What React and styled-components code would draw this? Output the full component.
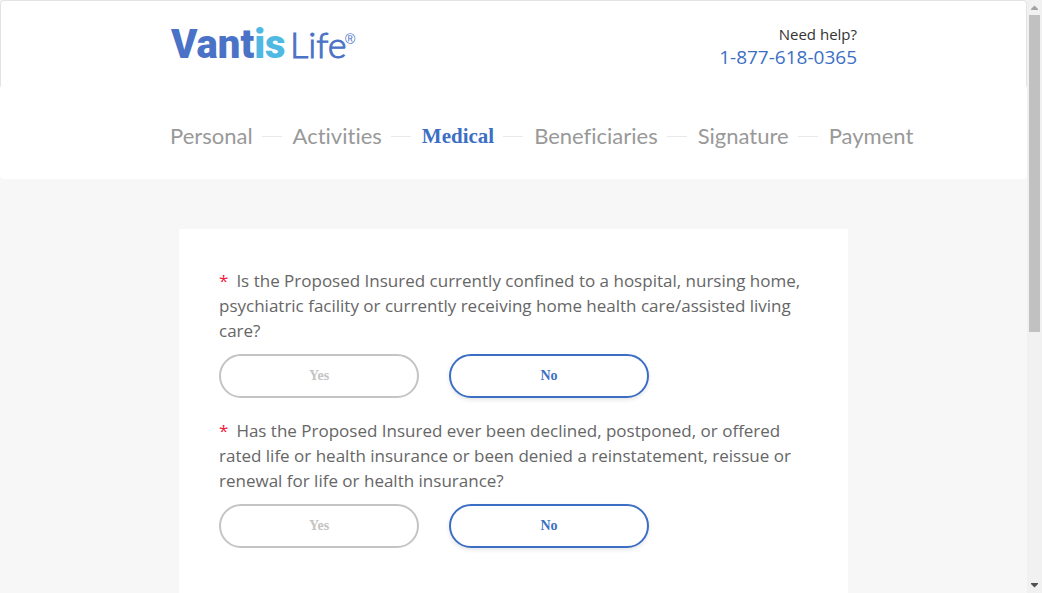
import React, { useState } from "react";
import styled, { createGlobalStyle } from "styled-components";

const blue = "#3c6fc4";

const GlobalStyle = createGlobalStyle`
  * { box-sizing: border-box; }
  body {
    margin: 0;
    background: #f7f7f7;
    color: #666;
    font-family: "Open Sans", sans-serif;
  }
`;

const Shell = styled.div`
  display: flex;
  align-items: stretch;
  height: 100vh;
`;

const Page = styled.div`
  flex: 1;
  min-width: 0;
  overflow: hidden;
`;

const Header = styled.header`
  padding: 19px 0 16px;
  background: #fff;
  border: 1px solid #e3e3e3;
  border-bottom: 0;
  border-radius: 4px 4px 0 0;
`;

const Container = styled.div`
  display: flex;
  justify-content: ${(p) => (p.$spread ? "space-between" : "flex-start")};
  max-width: 687px;
  margin: 0 auto;
`;

const LogoLink = styled.a`
  display: block;
  height: 50px;
`;

const Help = styled.div`
  display: flex;
  flex-direction: column;
  align-items: flex-end;
  padding-top: 4px;
  color: #333;
  font-size: 15px;
  line-height: 20px;
`;

const Phone = styled.a`
  color: ${blue};
  font-size: 19px;
  line-height: 26px;
  text-decoration: none;
`;

const StepBar = styled.nav`
  padding: 35px 0 28px;
  background: #fff;
  border-radius: 4px;
`;

const Steps = styled.ol`
  display: flex;
  margin: 0;
  padding: 0;
  list-style: none;
`;

const Step = styled.li`
  display: flex;
  align-items: center;
  white-space: nowrap;

  & + &::before {
    content: "";
    width: 20px;
    height: 1px;
    margin: 0 11px 0 9px;
    background: #e8e8e8;
  }
`;

const StepLink = styled.a`
  color: ${(p) => (p.$active ? blue : "#999")};
  font-family: ${(p) => (p.$active ? '"Liberation Serif", serif' : "Lato, sans-serif")};
  font-size: ${(p) => (p.$active ? 21 : 22)}px;
  font-weight: ${(p) => (p.$active ? 700 : 400)};
  font-variant-ligatures: none;
  line-height: 30px;
  text-decoration: none;
`;

const Card = styled.main`
  max-width: 669px;
  min-height: 100vh;
  margin: 50px auto 0;
  padding: 39px 40px;
  background: #fff;
  border-radius: 2px;
`;

const Question = styled.fieldset`
  margin: 0 0 20px;
  padding: 0;
  border: 0;
`;

const Prompt = styled.legend`
  margin-bottom: 11px;
  padding: 0;
  font-size: 17px;
  line-height: 25px;
`;

const Required = styled.span`
  margin-right: 8px;
  color: #f5163b;
`;

const Answers = styled.div`
  display: flex;
  gap: 30px;
`;

const AnswerButton = styled.button`
  width: 200px;
  height: 44px;
  padding: 0;
  background: #fff;
  border: 2px solid ${(p) => (p.$selected ? blue : "#c4c4c4")};
  border-radius: 22px;
  box-shadow: ${(p) => (p.$selected ? "0 2px 4px rgba(0, 0, 0, 0.1)" : "none")};
  color: ${(p) => (p.$selected ? blue : "#c4c4c4")};
  font: 700 14px "Liberation Serif", serif;
  cursor: pointer;
`;

const Scrollbar = styled.div`
  display: flex;
  flex-direction: column;
  flex: none;
  width: 15px;
  background: #f1f1f1;
`;

const ScrollArrow = styled.svg`
  display: block;
  flex: none;
  width: 15px;
  height: 15px;
  fill: ${(p) => (p.$muted ? "#a3a3a3" : "#505050")};
`;

const Track = styled.div`
  flex: 1;
  padding: 0 2px;
`;

const Thumb = styled.div`
  height: 56.3%;
  background: #c1c1c1;
`;

const steps = ["Personal", "Activities", "Medical", "Beneficiaries", "Signature", "Payment"];

const questions = [
  "Is the Proposed Insured currently confined to a hospital, nursing home, psychiatric facility or currently receiving home health care/assisted living care?",
  "Has the Proposed Insured ever been declined, postponed, or offered rated life or health insurance or been denied a reinstatement, reissue or renewal for life or health insurance?",
];

function Logo() {
  return (
    <svg width="190" height="50" viewBox="0 0 190 50" role="img" aria-label="Vantis Life">
      <text x="1" y="38" fontFamily="Roboto, sans-serif" fontSize="40" fontWeight="900" fill="#4a72c6">
        Vant<tspan fill="#4fb9e3">is</tspan>
      </text>
      <text x="120" y="38" fontFamily="Lato, sans-serif" fontSize="36" fontWeight="300" fill="#4a72c6" stroke="#4a72c6" strokeWidth="1">
        Life
      </text>
      <text x="175" y="24" fontFamily="Liberation Sans, sans-serif" fontSize="14" fill="#4a72c6">
        ®
      </text>
    </svg>
  );
}

function MedicalQuestion({ text }) {
  const [answer, setAnswer] = useState("No");
  return (
    <Question>
      <Prompt>
        <Required>*</Required>
        {text}
      </Prompt>
      <Answers>
        {["Yes", "No"].map((option) => (
          <AnswerButton
            key={option}
            type="button"
            $selected={answer === option}
            aria-pressed={answer === option}
            onClick={() => setAnswer(option)}
          >
            {option}
          </AnswerButton>
        ))}
      </Answers>
    </Question>
  );
}

export default function App() {
  return (
    <Shell>
      <GlobalStyle />
      <Page>
        <Header>
          <Container $spread>
            <LogoLink href="#">
              <Logo />
            </LogoLink>
            <Help>
              <span>Need help?</span>
              <Phone href="tel:1-877-618-0365">1-877-618-0365</Phone>
            </Help>
          </Container>
        </Header>
        <StepBar aria-label="Application steps">
          <Container>
            <Steps>
              {steps.map((name) => (
                <Step key={name}>
                  <StepLink href="#" $active={name === "Medical"}>
                    {name}
                  </StepLink>
                </Step>
              ))}
            </Steps>
          </Container>
        </StepBar>
        <Card>
          {questions.map((text) => (
            <MedicalQuestion key={text} text={text} />
          ))}
        </Card>
      </Page>
      <Scrollbar aria-hidden="true">
        <ScrollArrow $muted viewBox="0 0 15 15">
          <path d="M4 10h7v-1L7.5 5.5 4 9z" />
        </ScrollArrow>
        <Track>
          <Thumb />
        </Track>
        <ScrollArrow viewBox="0 0 15 15">
          <path d="M4 5h7v1L7.5 9.5 4 6z" />
        </ScrollArrow>
      </Scrollbar>
    </Shell>
  );
}
